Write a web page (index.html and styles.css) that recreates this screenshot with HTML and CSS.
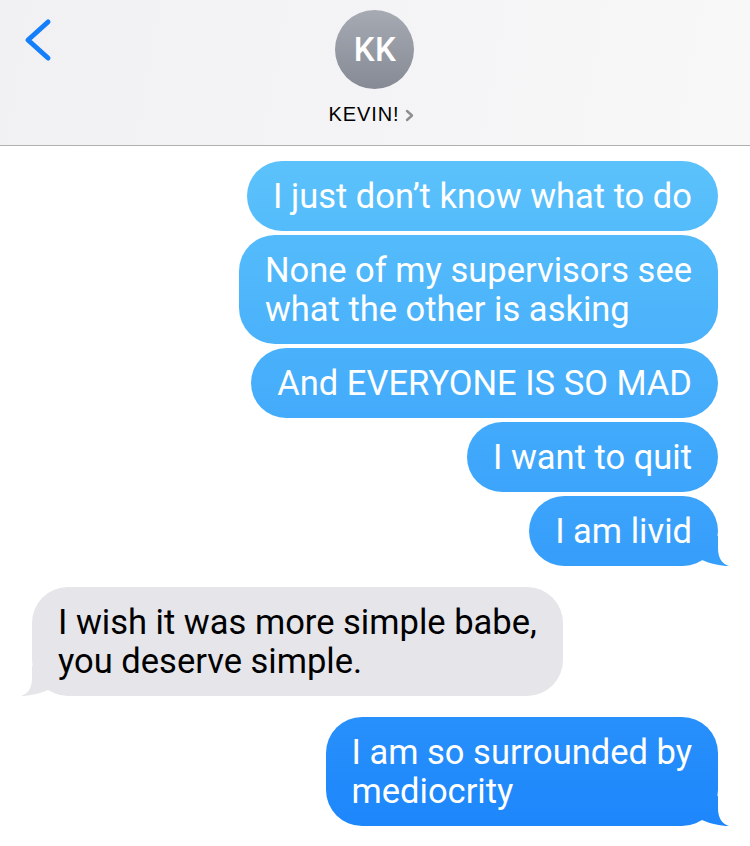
FILE: index.html
```html
<!DOCTYPE html>
<html lang="en">
<head>
<meta charset="utf-8">
<title>KEVIN!</title>
<link rel="stylesheet" href="styles.css">
</head>
<body>
<header class="navbar">
  <div class="nav-left">
    <svg class="back" width="60" height="70" viewBox="0 0 60 70" aria-label="Back">
      <polyline points="48,22 28,40 48,58" fill="none" stroke="#157efb" stroke-width="5" stroke-linecap="round" stroke-linejoin="round"/>
    </svg>
  </div>
  <div class="contact">
    <div class="avatar">KK</div>
    <div class="name">KEVIN!<svg class="chev" width="11" height="13" viewBox="0 0 11 13"><polyline points="3,2 8,6.5 3,11" fill="none" stroke="#8e8e93" stroke-width="2.4" stroke-linecap="round" stroke-linejoin="round"/></svg></div>
  </div>
  <div class="nav-right"></div>
</header>

<main class="thread">
  <div class="bubble sent">I just don’t know what to do</div>
  <div class="bubble sent">None of my supervisors see<br>what the other is asking</div>
  <div class="bubble sent">And EVERYONE IS SO MAD</div>
  <div class="bubble sent">I want to quit</div>
  <div class="bubble sent tail">I am livid</div>
  <div class="bubble received tail group-start">I wish it was more simple babe,<br>you deserve simple.</div>
  <div class="bubble sent tail group-start">I am so surrounded by<br>mediocrity</div>
</main>
</body>
</html>
```

FILE: styles.css
```css
* { box-sizing: border-box; }

html {
  margin: 0;
  padding: 0;
  background: #ffffff;
}

body {
  margin: 0;
  padding: 0;
  width: 750px;
  height: 846px;
  overflow: hidden;
  font-family: Roboto, "Liberation Sans", Arial, sans-serif;
}

.navbar {
  position: relative;
  height: 146px;
  display: grid;
  grid-template-columns: 1fr auto 1fr;
  background: linear-gradient(100deg, #f1f1f3 0%, #f4f4f6 50%, #f8f8f8 100%);
  border-bottom: 1px solid #b0b0b0;
}

.nav-left { align-self: start; }
.back { display: block; }

.contact {
  display: flex;
  flex-direction: column;
  align-items: center;
  padding-top: 10px;
}

.avatar {
  width: 79px;
  height: 79px;
  border-radius: 50%;
  background: linear-gradient(180deg, #a6aab3 0%, #868a94 100%);
  color: #ffffff;
  display: flex;
  align-items: center;
  justify-content: center;
  font-family: Roboto, "Liberation Sans", sans-serif;
  font-weight: 500;
  font-size: 33px;
  letter-spacing: 0.5px;
}

.name {
  margin-top: 13px;
  display: flex;
  align-items: center;
  font-family: "Liberation Sans", Arial, sans-serif;
  font-size: 20px;
  line-height: 24px;
  letter-spacing: 0.9px;
  color: #000000;
  padding-right: 6px;
}

.chev {
  margin-left: 5px;
  margin-top: 2px;
}

.thread {
  display: flex;
  flex-direction: column;
  align-items: flex-end;
  gap: 4px;
  padding: 15px 32px 0 32px;
}

.bubble {
  position: relative;
  padding: 15.5px 26px;
  border-radius: 36px;
  font-size: 34.5px;
  line-height: 39px;
  white-space: nowrap;
}

.sent {
  color: #ffffff;
  background: linear-gradient(180deg, #5fc6fb 0px, #5bc2fb 160px, #1d86fb 830px, #1a83fb 846px) fixed;
}

.received {
  align-self: flex-start;
  color: #000000;
  background: #e5e5ea;
}

.group-start { margin-top: 17px; }

.tail::before {
  content: "";
  position: absolute;
  z-index: -1;
  bottom: 0;
  width: 42px;
  height: 34px;
  clip-path: path("M14 28 L14 4 L30 4 L30 16 C30 26 34 32 41 34 C32 34 22 31.5 14 28 Z");
}

.sent.tail::before {
  right: -12px;
  background: linear-gradient(180deg, #5fc6fb 0px, #5bc2fb 160px, #1d86fb 830px, #1a83fb 846px) fixed;
}

.received.tail::before {
  left: -12px;
  background: #e5e5ea;
  transform: scaleX(-1);
}
```
